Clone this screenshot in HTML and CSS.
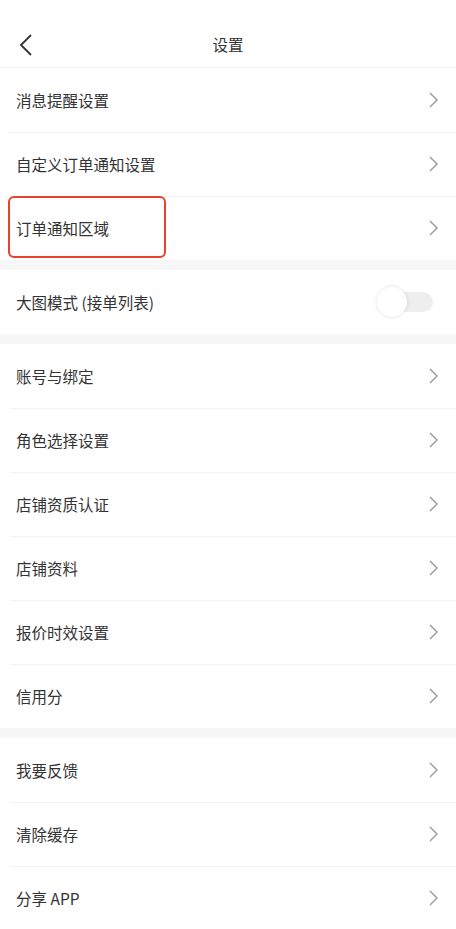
FILE: index.html
```html
<!DOCTYPE html>
<html lang="zh-CN">
<head>
    <meta charset="UTF-8">
    <meta name="viewport" content="width=device-width, initial-scale=1.0">
    <title>设置</title>
    <link rel="stylesheet" href="styles.css">
</head>
<body>
    <div class="page">
        <!-- Header -->
        <div class="header">
            <span class="back">
                <svg width="14" height="22" viewBox="0 0 14 22"><path d="M12 1 L2 11 L12 21" fill="none" stroke="#333" stroke-width="1.8"/></svg>
            </span>
            <h1>设置</h1>
        </div>

        <div class="group">
            <div class="row"><span>消息提醒设置</span><svg class="arrow" viewBox="0 0 10 16"><path d="M1 1 L8 8 L1 15"/></svg></div>
            <div class="row"><span>自定义订单通知设置</span><svg class="arrow" viewBox="0 0 10 16"><path d="M1 1 L8 8 L1 15"/></svg></div>
            <div class="row"><span class="marked">订单通知区域</span><svg class="arrow" viewBox="0 0 10 16"><path d="M1 1 L8 8 L1 15"/></svg></div>
        </div>

        <div class="group">
            <div class="row"><span>大图模式 (接单列表)</span><span class="switch"><span class="knob"></span></span></div>
        </div>

        <div class="group">
            <div class="row"><span>账号与绑定</span><svg class="arrow" viewBox="0 0 10 16"><path d="M1 1 L8 8 L1 15"/></svg></div>
            <div class="row"><span>角色选择设置</span><svg class="arrow" viewBox="0 0 10 16"><path d="M1 1 L8 8 L1 15"/></svg></div>
            <div class="row"><span>店铺资质认证</span><svg class="arrow" viewBox="0 0 10 16"><path d="M1 1 L8 8 L1 15"/></svg></div>
            <div class="row"><span>店铺资料</span><svg class="arrow" viewBox="0 0 10 16"><path d="M1 1 L8 8 L1 15"/></svg></div>
            <div class="row"><span>报价时效设置</span><svg class="arrow" viewBox="0 0 10 16"><path d="M1 1 L8 8 L1 15"/></svg></div>
            <div class="row"><span>信用分</span><svg class="arrow" viewBox="0 0 10 16"><path d="M1 1 L8 8 L1 15"/></svg></div>
        </div>

        <div class="group">
            <div class="row"><span>我要反馈</span><svg class="arrow" viewBox="0 0 10 16"><path d="M1 1 L8 8 L1 15"/></svg></div>
            <div class="row"><span>清除缓存</span><svg class="arrow" viewBox="0 0 10 16"><path d="M1 1 L8 8 L1 15"/></svg></div>
            <div class="row"><span>分享 APP</span><svg class="arrow" viewBox="0 0 10 16"><path d="M1 1 L8 8 L1 15"/></svg></div>
        </div>
    </div>
</body>
</html>
```

FILE: styles.css
```css
/* General */
* {
    box-sizing: border-box;
    margin: 0;
    padding: 0;
}
body {
    background-color: #f7f7f7;
    font-family: "Noto Sans CJK SC", "Noto Sans", sans-serif;
    color: #333;
}
.page {
    width: 456px;
}

/* Header */
.header {
    height: 68px;
    background-color: #fff;
    border-bottom: 1px solid #f2f2f2;
    display: flex;
    align-items: center;
    justify-content: center;
    position: relative;
    padding-top: 20px;
}
.header h1 {
    font-size: 15.5px;
    font-weight: normal;
    color: #333;
}
.back {
    position: absolute;
    left: 19px;
    top: 34px;
    display: flex;
}

/* Groups and rows */
.group {
    background-color: #fff;
    margin-bottom: 10px;
}
.row {
    height: 64px;
    display: flex;
    align-items: center;
    justify-content: space-between;
    padding: 0 17px 0 16px;
    font-size: 15.5px;
    position: relative;
}
.row + .row::before {
    content: "";
    position: absolute;
    top: 0;
    left: 10px;
    right: 0;
    border-top: 1px solid #f2f2f2;
}
.arrow {
    width: 10px;
    height: 16px;
    fill: none;
    stroke: #999;
    stroke-width: 1.4;
}

/* Red annotation box */
.marked::after {
    content: "";
    position: absolute;
    left: 8px;
    top: 0;
    width: 154px;
    height: 58px;
    border: 2px solid #e8412c;
    border-radius: 6px;
}

/* Toggle */
.switch {
    width: 56px;
    height: 20px;
    position: relative;
    margin-right: 6px;
}
.switch::before {
    content: "";
    position: absolute;
    left: 14px;
    right: 0;
    top: 0;
    bottom: 0;
    background-color: #eee;
    border-radius: 10px;
}
.knob {
    position: absolute;
    left: 0;
    top: -5px;
    width: 30px;
    height: 30px;
    border-radius: 50%;
    background-color: #fff;
    box-shadow: 0 0 4px rgba(0, 0, 0, 0.12);
}
```
